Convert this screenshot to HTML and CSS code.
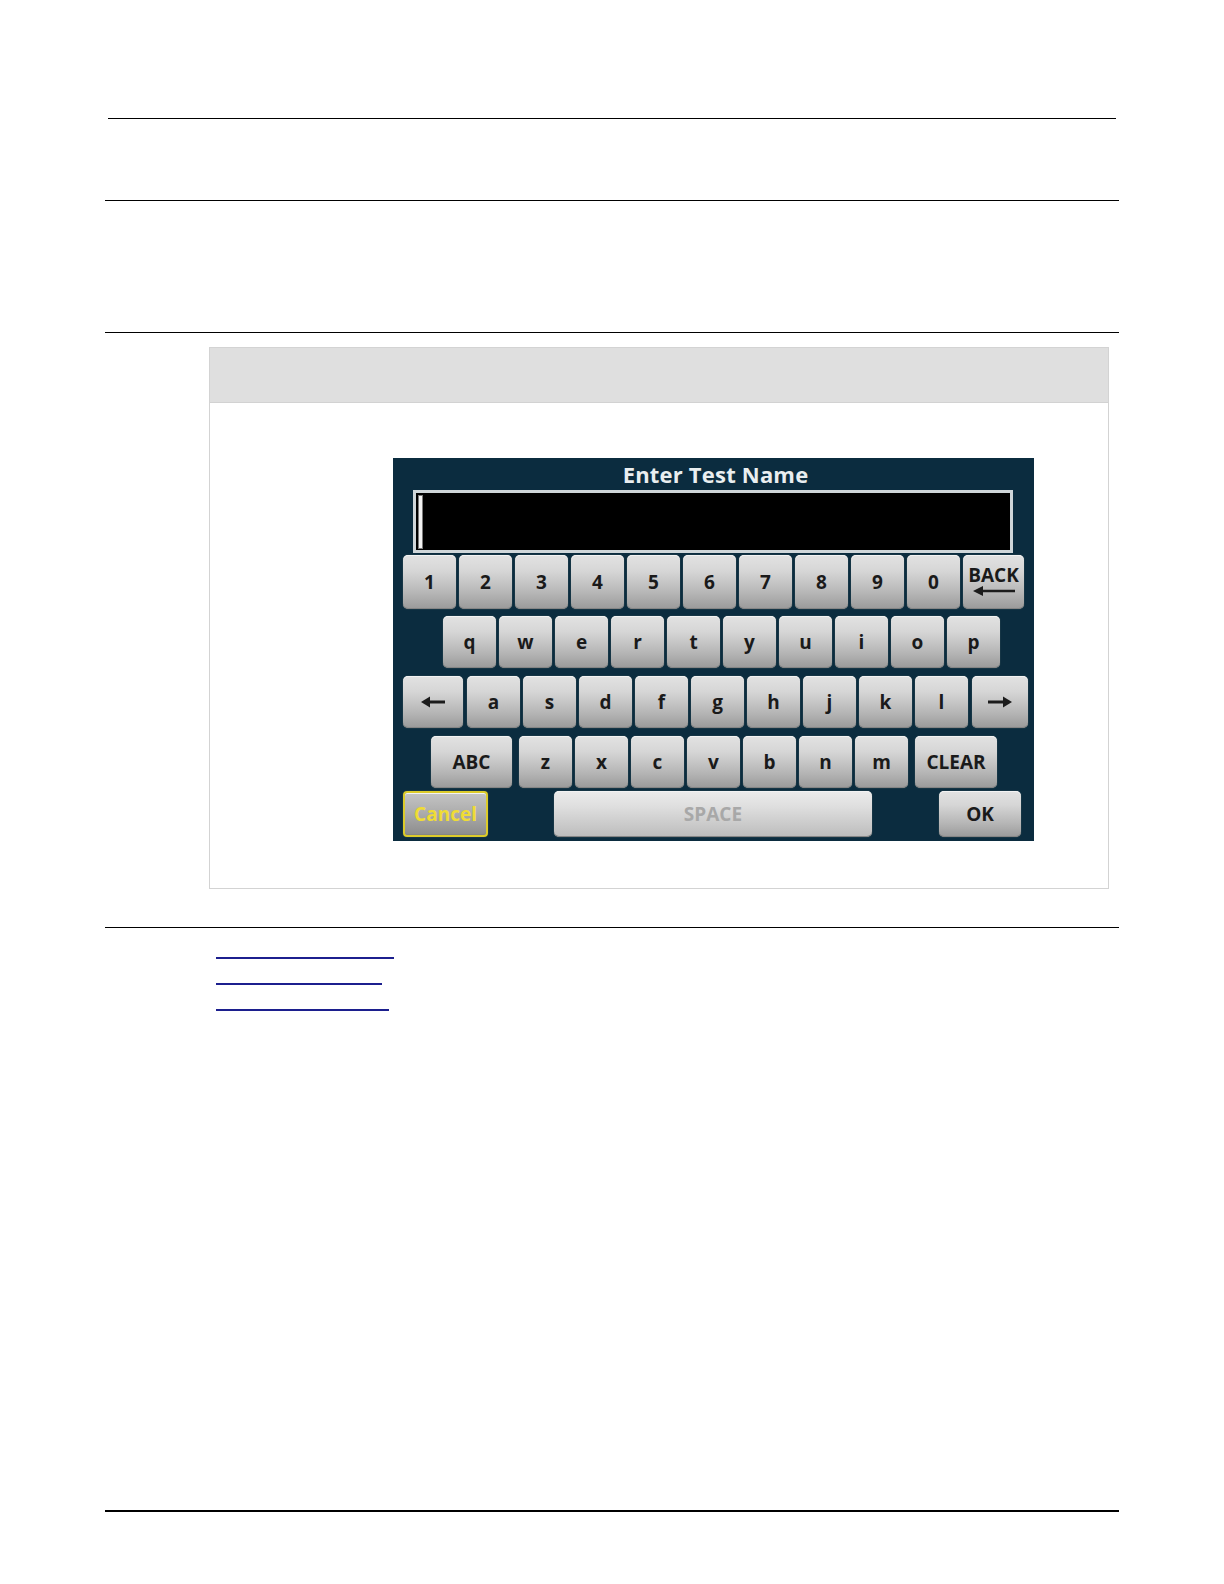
FILE: index.html
```html
<!DOCTYPE html>
<html lang="en">
<head>
<meta charset="utf-8">
<title>Enter Test Name keyboard</title>
<link rel="stylesheet" href="styles.css">
</head>
<body>
<div class="page">
  <div class="rule rule-top"></div>
  <div class="rule rule-2"></div>
  <div class="rule rule-3"></div>

  <div class="figure">
    <div class="figure-head"></div>
    <div class="figure-body">
      <div class="kbd">
        <div class="kbd-title">Enter Test Name</div>
        <div class="kbd-input"><span class="cursor"></span></div>

        <div class="row row-1">
          <span class="key">1</span><span class="key">2</span><span class="key">3</span><span class="key">4</span><span class="key">5</span><span class="key">6</span><span class="key">7</span><span class="key">8</span><span class="key">9</span><span class="key">0</span>
          <span class="key key-back">
            <span class="back-label">BACK</span>
            <svg class="back-arrow" width="46" height="12" viewBox="0 0 46 12"><path d="M9 6H44" stroke="#1c1c1c" stroke-width="2.4" fill="none"/><path d="M2 6L12 1V11Z" fill="#1c1c1c"/></svg>
          </span>
        </div>

        <div class="row row-2">
          <span class="key">q</span><span class="key">w</span><span class="key">e</span><span class="key">r</span><span class="key">t</span><span class="key">y</span><span class="key">u</span><span class="key">i</span><span class="key">o</span><span class="key">p</span>
        </div>

        <div class="row row-3">
          <span class="key key-left"><svg width="26" height="14" viewBox="0 0 26 14"><path d="M8 7H25" stroke="#1c1c1c" stroke-width="3" fill="none"/><path d="M1 7L10 1.5V12.5Z" fill="#1c1c1c"/></svg></span>
          <span class="key">a</span><span class="key">s</span><span class="key">d</span><span class="key">f</span><span class="key">g</span><span class="key">h</span><span class="key">j</span><span class="key">k</span><span class="key">l</span>
          <span class="key key-right"><svg width="26" height="14" viewBox="0 0 26 14"><path d="M1 7H18" stroke="#1c1c1c" stroke-width="3" fill="none"/><path d="M25 7L16 1.5V12.5Z" fill="#1c1c1c"/></svg></span>
        </div>

        <div class="row row-4">
          <span class="key key-abc">ABC</span>
          <span class="key">z</span><span class="key">x</span><span class="key">c</span><span class="key">v</span><span class="key">b</span><span class="key">n</span><span class="key">m</span>
          <span class="key key-clear">CLEAR</span>
        </div>

        <div class="row row-5">
          <span class="key key-cancel">Cancel</span>
          <span class="key key-space">SPACE</span>
          <span class="key key-ok">OK</span>
        </div>
      </div>
    </div>
  </div>

  <div class="rule rule-4"></div>

  <div class="links">
    <span class="link-line link-1"></span>
    <span class="link-line link-2"></span>
    <span class="link-line link-3"></span>
  </div>

  <div class="rule rule-bottom"></div>
</div>
</body>
</html>
```

FILE: styles.css
```css
html, body {
  margin: 0;
  padding: 0;
  background: #ffffff;
}

body {
  font-family: "Open Sans", "Liberation Sans", sans-serif;
}

.page {
  margin-left: 105px;
  width: 1014px;
  padding-top: 118px;
  padding-bottom: 60px;
}

.rule {
  height: 1px;
  background: #000000;
}

.rule-top {
  margin-left: 3px;
  width: 1008px;
}

.rule-2 {
  margin-top: 81px;
}

.rule-3 {
  margin-top: 131px;
}

.figure {
  margin-top: 14px;
  margin-left: 104px;
  width: 900px;
  box-sizing: border-box;
  border: 1px solid #d3d3d3;
  background: #ffffff;
}

.figure-head {
  height: 54px;
  background: #dfdfdf;
  border-bottom: 1px solid #d2d2d2;
}

.figure-body {
  padding: 55px 0 47px 183px;
}

/* keyboard screen */
.kbd {
  width: 641px;
  height: 383px;
  box-sizing: border-box;
  background: #0b2c3f;
  padding-top: 2px;
  display: flex;
  flex-direction: column;
}

.kbd-title {
  height: 28px;
  line-height: 28px;
  padding-left: 4px;
  text-align: center;
  color: #e9eef0;
  font-size: 22px;
  font-weight: 700;
  letter-spacing: 0.2px;
}

.kbd-input {
  margin-top: 2px;
  margin-left: 20px;
  width: 600px;
  height: 63px;
  box-sizing: border-box;
  border: 3px solid #cfd6d9;
  background: #000000;
  display: flex;
}

.cursor {
  margin: 3px 0 0 3px;
  width: 3px;
  height: 52px;
  background: #f2f2f2;
  box-shadow: 0 0 0 1px #7a7a7a;
}

.row {
  display: flex;
  gap: 3px;
  padding-left: 10px;
}

.row-1 { margin-top: 2px; height: 54px; }
.row-2 { margin-top: 7px; height: 52px; padding-left: 50px; }
.row-3 { margin-top: 8px; height: 52px; }
.row-4 { margin-top: 8px; height: 52px; padding-left: 38px; }
.row-5 { margin-top: 3px; height: 46px; gap: 0; }

.key {
  width: 53px;
  height: 100%;
  box-sizing: border-box;
  border-radius: 5px;
  background: linear-gradient(to bottom, #e2e2e2 0%, #d6d6d6 30%, #b6b6b6 70%, #9a9a9a 100%);
  box-shadow: inset 0 1px 0 #f3f3f3, inset 0 -1px 0 #858585, 0 0 0 1px #163545;
  display: flex;
  align-items: center;
  justify-content: center;
  color: #1a1a1a;
  font-size: 19px;
  font-weight: 700;
  line-height: 1;
}

.key-back {
  width: 61px;
  flex-direction: column;
  justify-content: flex-start;
}

.back-label {
  display: block;
  margin-top: 11px;
  line-height: 18px;
}

.back-arrow {
  display: block;
  margin-top: 1px;
}

.key-left {
  width: 60px;
  margin-right: 1px;
}

.key-right {
  width: 56px;
  margin-left: 1px;
}

.key-abc {
  width: 81px;
  margin-right: 4px;
}

.key-clear {
  width: 82px;
  margin-left: 4px;
}

.key-cancel {
  width: 85px;
  border: 2px solid #dccb2a;
  border-radius: 4px;
  color: #efdc35;
  background: linear-gradient(to bottom, #c4c4c4 0%, #b0b0b0 40%, #8c8c8c 100%);
}

.key-space {
  width: 318px;
  margin-left: 66px;
  color: #a8a8a8;
  background: linear-gradient(to bottom, #ececec 0%, #dedede 35%, #bcbcbc 100%);
}

.key-ok {
  width: 82px;
  margin-left: 67px;
}

.rule-4 {
  margin-top: 38px;
}

.links {
  margin-top: 5px;
  margin-left: 111px;
  display: flex;
  flex-direction: column;
  align-items: flex-start;
}

.link-line {
  display: block;
  height: 24px;
  border-bottom: 2px solid #1c1f8e;
}

.link-1 { width: 178px; }
.link-2 { width: 166px; }
.link-3 { width: 173px; }

.rule-bottom {
  margin-top: 499px;
  height: 2px;
}
```
